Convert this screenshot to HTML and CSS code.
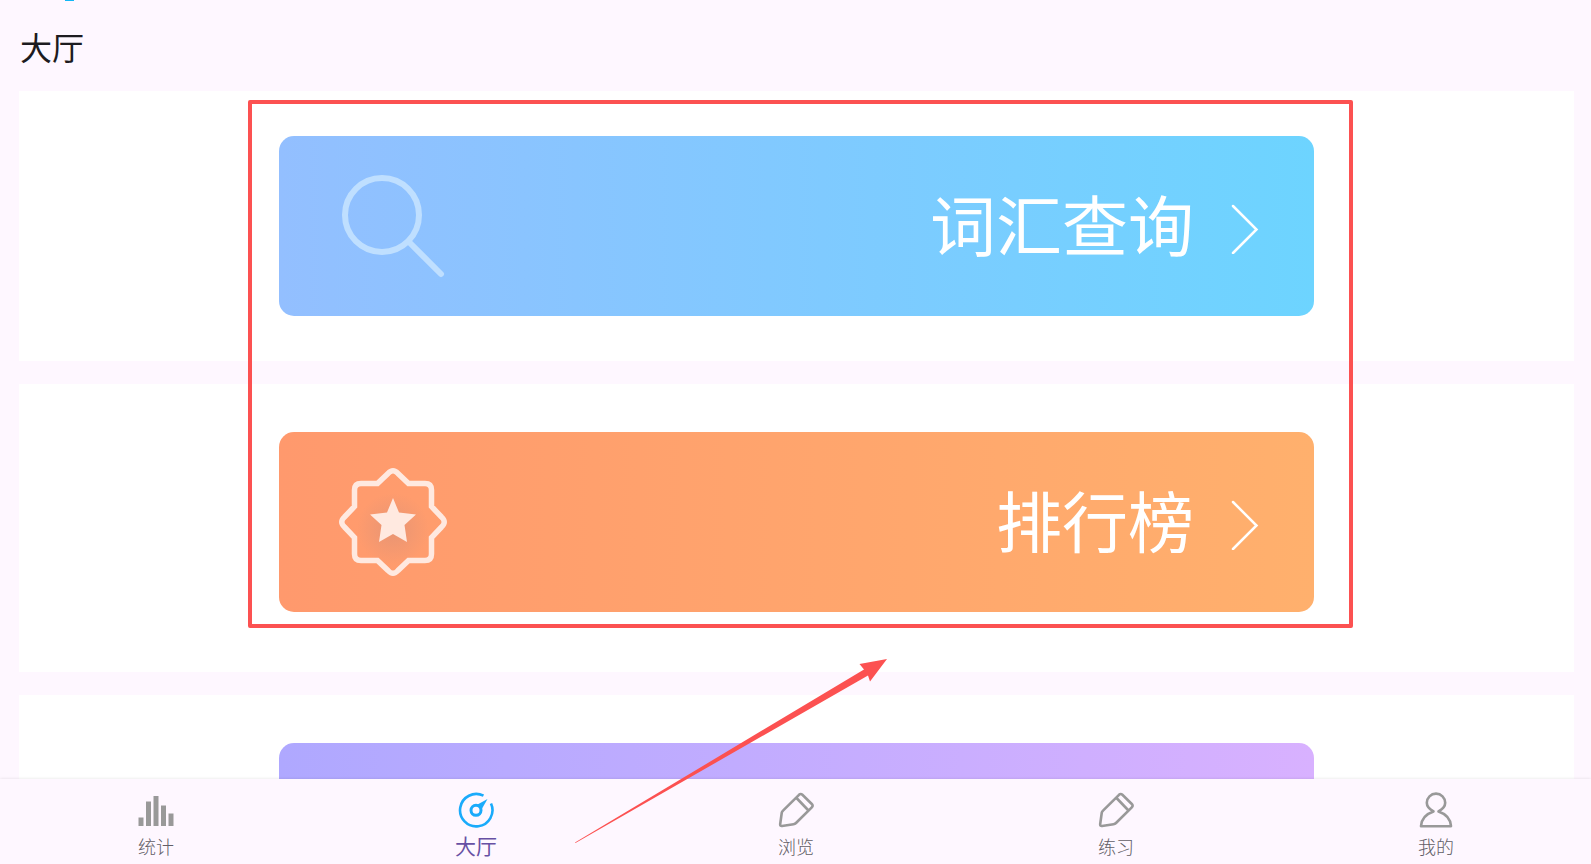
FILE: index.html
```html
<!DOCTYPE html>
<html lang="zh-CN">
<head>
  <meta charset="UTF-8">
  <meta name="viewport" content="width=device-width, initial-scale=1.0">
  <title>大厅</title>
  <link rel="stylesheet" href="styles.css">
</head>
<body>
  <span class="top-dot"></span>

  <header class="header">
    <h1>大厅</h1>
  </header>

  <main class="hall">
    <section class="card card-search">
      <a href="#search" class="banner banner-blue">
        <svg class="banner-icon" viewBox="0 0 120 120" fill="none" stroke="#bfdfff" stroke-width="6" stroke-linecap="round">
          <circle cx="49" cy="49" r="37"/>
          <path d="M76 76L108 108"/>
        </svg>
        <span class="banner-title">词汇查询</span>
        <svg class="chevron" viewBox="0 0 28 50" fill="none" stroke="#fff" stroke-width="2.5" stroke-linecap="round"><path d="M2 2L25.500 25.500L2 49"/></svg>
      </a>
    </section>

    <section class="card">
      <a href="#rank" class="banner banner-orange">
        <svg class="banner-icon" viewBox="0 0 120 120">
          <defs>
            <radialGradient id="starGlow">
              <stop offset="0" stop-color="#d89078" stop-opacity="0.6"/>
              <stop offset="1" stop-color="#d89078" stop-opacity="0"/>
            </radialGradient>
          </defs>
          <circle cx="60" cy="67" r="36" fill="url(#starGlow)"/>
          <path fill="none" stroke="#ffe9e0" stroke-width="5.500" d="M44.500 21.500L55 11.500Q60 6 65 11.500L75.500 21.500H92Q98.500 21.500 98.500 28V44.500L108.500 55Q114 60 108.500 65L98.500 75.500V92Q98.500 98.500 92 98.500H75.500L65 108.500Q60 114 55 108.500L44.500 98.500H28Q21.500 98.500 21.500 92V75.500L11.500 65Q6 60 11.500 55L21.500 44.500V28Q21.500 21.500 28 21.500Z"/>
          <path fill="#ffe9e0" d="M60 36L66 50.500L83 52.500L71.500 63L74 80L60 72L46 80L48.500 63L37 52.500L54 50.500Z"/>
        </svg>
        <span class="banner-title">排行榜</span>
        <svg class="chevron" viewBox="0 0 28 50" fill="none" stroke="#fff" stroke-width="2.5" stroke-linecap="round"><path d="M2 2L25.500 25.500L2 49"/></svg>
      </a>
    </section>

    <section class="card">
      <a href="#more" class="banner banner-purple" aria-label="更多"></a>
    </section>
  </main>

  <nav class="tabbar">
    <a href="#stats" class="tab">
      <svg viewBox="0 0 36 36" fill="#999"><path d="M0.500 25.500h5V34h-5zM8 9.500h5V34H8zM15.500 4h5v30h-5zM23 13.500h5V34h-5zM30.500 21.500h5V34h-5z"/></svg>
      <span>统计</span>
    </a>
    <a href="#hall" class="tab active">
      <svg viewBox="0 0 36 36" fill="none" stroke="#1aabfb" stroke-width="2.6">
        <path d="M25.500 3.700A16.200 16.200 0 1 0 33 11.500"/>
        <circle cx="18" cy="18.300" r="5" stroke-width="3"/>
        <path fill="#1aabfb" stroke="none" d="M29.500 7L19.500 12.500L23.800 17Z"/>
      </svg>
      <span>大厅</span>
    </a>
    <a href="#browse" class="tab">
      <svg viewBox="0 0 36 36" fill="none" stroke="#999" stroke-width="2.6" stroke-linejoin="round"><path d="M21 2.800Q22.700 1.200 24.400 2.800L33.800 12Q35.500 13.700 33.800 15.400L18 31Q17 32 15.500 32.200L4 34Q2 34.300 2.200 32L3.800 20.500Q4 19.500 5 18.700ZM18.500 6L30 18"/></svg>
      <span>浏览</span>
    </a>
    <a href="#practice" class="tab">
      <svg viewBox="0 0 36 36" fill="none" stroke="#999" stroke-width="2.6" stroke-linejoin="round"><path d="M21 2.800Q22.700 1.200 24.400 2.800L33.800 12Q35.500 13.700 33.800 15.400L18 31Q17 32 15.500 32.200L4 34Q2 34.300 2.200 32L3.800 20.500Q4 19.500 5 18.700ZM18.500 6L30 18"/></svg>
      <span>练习</span>
    </a>
    <a href="#mine" class="tab">
      <svg viewBox="0 0 36 36" fill="none" stroke="#999" stroke-width="2.6" stroke-linejoin="round"><path d="M15.500 19.500C11 17 8.800 14.500 8.800 10.800A9.200 9.200 0 0 1 27.200 10.800C27.200 14.500 25 17 20.500 19.500C28 22 32.500 26 33 34.200H3C3.500 26 8 22 15.500 19.500Z"/></svg>
      <span>我的</span>
    </a>
  </nav>

  <!-- red marks over the page -->
  <div class="mark-box"></div>
  <svg class="mark-arrow" viewBox="0 0 312 184"><path fill="#fc5151" d="M0 183.500L289 10.500L284.500 5L312 0L295 22.500L293 16.500L0.500 184Z"/></svg>
</body>
</html>
```

FILE: styles.css
```css
* {
  box-sizing: border-box;
}

body {
  position: relative;
  display: flex;
  flex-direction: column;
  height: 100vh;
  margin: 0;
  overflow: hidden;
  background-color: #fef7ff;
  color: #1d1b20;
  font-family: "Noto Sans CJK SC", sans-serif;
  font-weight: 300;
}

a {
  color: inherit;
  text-decoration: none;
}

.top-dot {
  position: absolute;
  top: 0;
  left: 65px;
  width: 9px;
  height: 1px;
  background-color: #12b7f5;
}

.header {
  flex: none;
  height: 91px;
  padding: 22px 20px 0;
}

h1 {
  margin: 0;
  font-size: 32px;
  font-weight: 400;
  line-height: 48px;
}

.hall {
  display: flex;
  flex: 1;
  flex-direction: column;
  gap: 23px;
  min-height: 0;
  padding: 0 17px 0 19px;
  overflow: hidden;
}

.card {
  flex: none;
  padding: 48px 260px 60px;
  background-color: #fff;
}

.card-search {
  padding: 45px 260px;
}

.banner {
  display: flex;
  align-items: center;
  height: 180px;
  padding: 0 55px 0 54px;
  border-radius: 15px;
  color: #fff;
}

.banner-blue {
  background: linear-gradient(to right, #93bfff, #6dd4ff);
}

.banner-orange {
  background: linear-gradient(to right, #ff996d, #ffb06d);
}

.banner-purple {
  background: linear-gradient(to right, #afa8ff, #d8b1ff);
}

.banner-icon {
  width: 120px;
  height: 120px;
}

.banner-title {
  margin-bottom: 8px;
  margin-left: auto;
  font-size: 66px;
  font-weight: 400;
  line-height: 96px;
}

.chevron {
  width: 28px;
  height: 50px;
  margin-top: 5px;
  margin-left: 37px;
}

.tabbar {
  z-index: 1;
  display: flex;
  flex: none;
  justify-content: space-between;
  height: 85px;
  padding: 13px 115px 0 116px;
  background-color: #fef7ff;
  box-shadow: 0 0 3px rgba(0, 0, 0, 0.12);
}

.tab {
  display: flex;
  flex-direction: column;
  align-items: center;
  width: 80px;
  color: #625e66;
  font-size: 18px;
  line-height: 36px;
}

.tab svg {
  width: 36px;
  height: 36px;
}

.tab.active {
  color: #6750a4;
  font-size: 21px;
  font-weight: 400;
  line-height: 34px;
}

.mark-box {
  position: absolute;
  z-index: 2;
  top: 100px;
  right: 238px;
  left: 248px;
  height: 528px;
  border: 4px solid #fc5151;
  border-radius: 2px;
  pointer-events: none;
}

.mark-arrow {
  position: absolute;
  z-index: 2;
  top: 659px;
  left: 575px;
  width: 312px;
  height: 184px;
  pointer-events: none;
}
```
